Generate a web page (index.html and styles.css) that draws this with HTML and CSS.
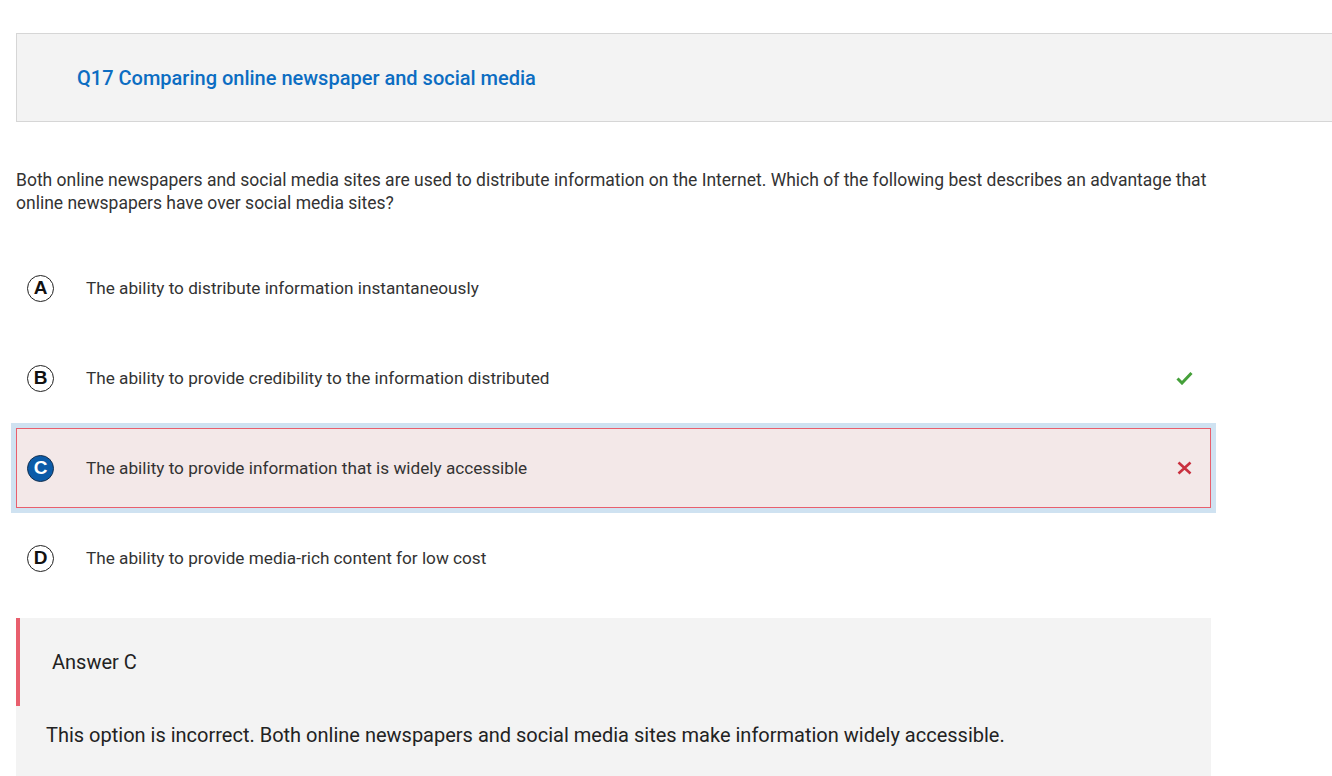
FILE: index.html
```html
<!DOCTYPE html>
<html lang="en">
<head>
<meta charset="utf-8">
<title>Q17</title>
<link rel="stylesheet" href="styles.css">
</head>
<body>
<div class="page">
  <div class="q-header">
    <h2 class="q-title">Q17 Comparing online newspaper and social media</h2>
  </div>
  <div class="content">
    <p class="stem">Both online newspapers and social media sites are used to distribute information on the Internet. Which of the following best describes an advantage that online newspapers have over social media sites?</p>
    <ul class="options">
      <li class="option">
        <span class="letter">A</span>
        <span class="opt-text">The ability to distribute information instantaneously</span>
      </li>
      <li class="option">
        <span class="letter">B</span>
        <span class="opt-text">The ability to provide credibility to the information distributed</span>
        <svg class="mark" width="17" height="14" viewBox="0 0 17 14"><path d="M1.5 7.5 L6 12 L15.5 2" fill="none" stroke="#45a03a" stroke-width="3"/></svg>
      </li>
      <li class="option selected wrong">
        <span class="letter">C</span>
        <span class="opt-text">The ability to provide information that is widely accessible</span>
        <svg class="mark" width="17" height="14" viewBox="0 0 17 14"><path d="M2.5 1.5 L14.5 12.5 M14.5 1.5 L2.5 12.5" fill="none" stroke="#c9303f" stroke-width="2.6"/></svg>
      </li>
      <li class="option">
        <span class="letter">D</span>
        <span class="opt-text">The ability to provide media-rich content for low cost</span>
      </li>
    </ul>
    <div class="feedback">
      <div class="fb-head">Answer C</div>
      <p class="fb-body">This option is incorrect. Both online newspapers and social media sites make information widely accessible.</p>
    </div>
  </div>
</div>
</body>
</html>
```

FILE: styles.css
```css
html, body {
  margin: 0;
  padding: 0;
  background: #ffffff;
  overflow: hidden;
}
body {
  font-family: Roboto, "Liberation Sans", Arial, sans-serif;
  color: #333333;
}
.page {
  padding-left: 16px;
  padding-top: 33px;
}
.q-header {
  width: 1340px;
  height: 87px;
  background: #f3f3f3;
  border: 1px solid #d6d6d6;
  display: flex;
  align-items: center;
}
.q-title {
  margin: 0 0 0 60px;
  font-size: 20px;
  font-weight: 500;
  color: #0c6dc2;
}
.content {
  width: 1195px;
}
.stem {
  margin: 47px 0 0 0;
  font-size: 17.5px;
  line-height: 23px;
  color: #333333;
}
.options {
  list-style: none;
  margin: 33px 0 0 0;
  padding: 0;
  display: flex;
  flex-direction: column;
  gap: 10px;
}
.option {
  box-sizing: border-box;
  height: 80px;
  border: 1px solid transparent;
  display: flex;
  align-items: center;
  padding: 0 17px 0 10px;
}
.option.selected {
  background: #f3e8e8;
  border-color: #e85f6d;
  box-shadow: 0 0 0 5px #cfe2f1;
}
.letter {
  box-sizing: border-box;
  width: 27px;
  height: 27px;
  border: 1.5px solid #222222;
  border-radius: 50%;
  display: flex;
  align-items: center;
  justify-content: center;
  font-family: "Liberation Sans", Arial, sans-serif;
  font-weight: bold;
  font-size: 19px;
  color: #111111;
  flex: none;
}
.option.selected .letter {
  background: #0b5ba8;
  color: #ffffff;
  border-color: #14304f;
}
.opt-text {
  margin-left: 32px;
  font-size: 17.2px;
  flex: 1;
}
.mark {
  flex: none;
}
.feedback {
  margin-top: 20px;
  background: #f3f3f3;
  height: 158px;
}
.fb-head {
  box-sizing: border-box;
  height: 88px;
  border-left: 4px solid #e85f6d;
  padding-left: 32px;
  display: flex;
  align-items: center;
  font-size: 20px;
  color: #222222;
}
.fb-body {
  margin: 0;
  padding: 15px 30px 0 30px;
  font-size: 20px;
  line-height: 28px;
  color: #222222;
}
```
